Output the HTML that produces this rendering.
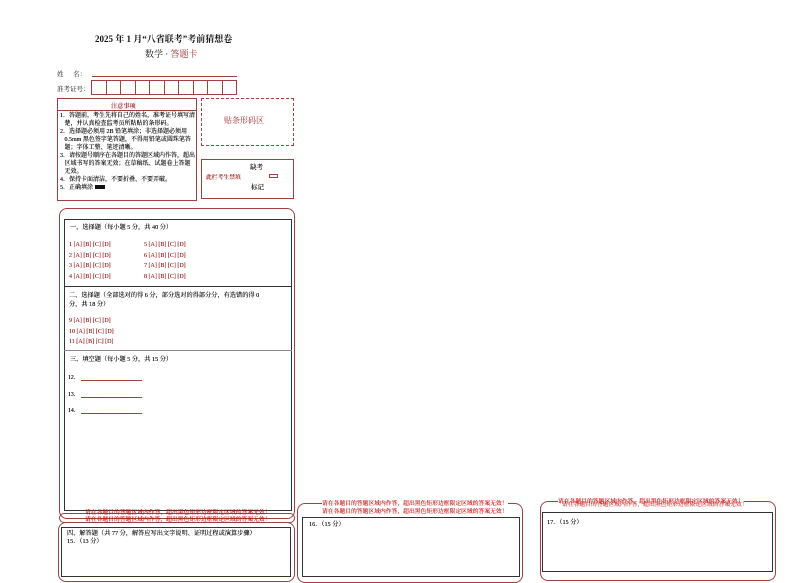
<!DOCTYPE html>
<html><head><meta charset="utf-8"><style>
*{margin:0;padding:0;box-sizing:border-box}
body{width:794px;height:562px;background:#fff;position:relative;overflow:hidden;font-family:"Liberation Serif","Noto Serif CJK SC",serif;color:#111}
.a{position:absolute;white-space:nowrap}
.r{color:#a52a2a}
.s{font-size:5.8px;line-height:8px;text-shadow:0 0 .3px currentColor}
.red{color:#d01010}
.rb{border:1px solid #a0403f}
.kb{border:1px solid #333}
</style></head><body>
<div class="a" style="left:95px;top:32px;font-size:9px;font-weight:bold">2025 年 1 月“八省联考”考前猜想卷</div>
<div class="a" style="left:145px;top:47px;font-size:9px">数学 · <span class="r">答题卡</span></div>
<div class="a" style="left:57px;top:69px;font-size:6.5px">姓&nbsp;&nbsp;&nbsp;&nbsp;&nbsp;&nbsp;名：</div>
<div class="a" style="left:92px;top:76px;width:145px;border-top:1px solid #a0403f"></div>
<div class="a" style="left:57px;top:84px;font-size:6.5px">准考证号：</div>
<div class="a" style="left:91px;top:80px;width:146px;height:15px;display:flex">
<div style="flex:1;border:1px solid #a0403f"></div><div style="flex:1;border:1px solid #a0403f;border-left:0"></div><div style="flex:1;border:1px solid #a0403f;border-left:0"></div><div style="flex:1;border:1px solid #a0403f;border-left:0"></div><div style="flex:1;border:1px solid #a0403f;border-left:0"></div><div style="flex:1;border:1px solid #a0403f;border-left:0"></div><div style="flex:1;border:1px solid #a0403f;border-left:0"></div><div style="flex:1;border:1px solid #a0403f;border-left:0"></div><div style="flex:1;border:1px solid #a0403f;border-left:0"></div><div style="flex:1;border:1px solid #a0403f;border-left:0"></div></div>
<div class="a rb" style="left:57px;top:98px;width:140px;height:103px"></div>
<div class="a" style="left:57px;top:110px;width:140px;border-top:1px solid #a0403f"></div>
<div class="a r" style="left:111px;top:101px;font-size:6.2px;font-weight:bold">注意事项</div>
<div class="a s" style="left:60px;top:112px;font-size:6px">1．答题前，考生先将自己的姓名，准考证号填写清<br>&nbsp;&nbsp;&nbsp;楚，并认真检查监考员所粘贴的条形码。<br>2．选择题必须用 2B 铅笔填涂；非选择题必须用<br>&nbsp;&nbsp;&nbsp;0.5mm 黑色签字笔答题，不得用铅笔或圆珠笔答<br>&nbsp;&nbsp;&nbsp;题；字体工整、笔迹清晰。<br>3．请按题号顺序在各题目的答题区域内作答，超出<br>&nbsp;&nbsp;&nbsp;区域书写的答案无效；在草稿纸、试题卷上答题<br>&nbsp;&nbsp;&nbsp;无效。<br>4．保持卡面清洁，不要折叠、不要弄破。<br>5．正确填涂 <span style="display:inline-block;width:10px;height:4px;background:#111"></span></div>
<div class="a" style="left:201px;top:98px;width:93px;height:48px;border:1px dashed #a0403f"></div>
<div class="a r" style="left:224px;top:115px;font-size:8px">贴条形码区</div>
<div class="a rb" style="left:201px;top:159px;width:93px;height:40px"></div>
<div class="a s" style="left:250px;top:164px;font-size:6.5px">缺考</div>
<div class="a r" style="left:206px;top:172px;font-size:5.8px;font-weight:bold">此栏考生禁填</div>
<div class="a rb" style="left:269px;top:174px;width:9px;height:4px"></div>
<div class="a s" style="left:251px;top:184px;font-size:6.5px">标记</div>

<div class="a rb" style="left:59px;top:208px;width:236px;height:311px;border-radius:8px"></div>
<div class="a kb" style="left:64px;top:219px;width:228px;height:292px;background:#fff"></div>
<div class="a" style="left:64px;top:286px;width:228px;border-top:1px solid #333"></div>
<div class="a" style="left:64px;top:350px;width:228px;border-top:1px solid #888"></div>
<div class="a s" style="left:70px;top:224px;font-size:6.2px">一、选择题（每小题 5 分，共 40 分）</div>
<div class="a s r" style="left:69px;top:240px;line-height:10.5px;font-size:6px">1 [A] [B] [C] [D]<br>2 [A] [B] [C] [D]<br>3 [A] [B] [C] [D]<br>4 [A] [B] [C] [D]</div>
<div class="a s r" style="left:144px;top:240px;line-height:10.5px;font-size:6px">5 [A] [B] [C] [D]<br>6 [A] [B] [C] [D]<br>7 [A] [B] [C] [D]<br>8 [A] [B] [C] [D]</div>
<div class="a s" style="left:69px;top:291px;font-size:6.2px;line-height:9px">二、选择题（全部选对的得 6 分，部分选对的得部分分，有选错的得 0<br>分，共 18 分）</div>
<div class="a s r" style="left:69px;top:316px;line-height:10.5px;font-size:6px">9 [A] [B] [C] [D]<br>10 [A] [B] [C] [D]<br>11 [A] [B] [C] [D]</div>
<div class="a s" style="left:70px;top:356px;font-size:6.2px">三、填空题（每小题 5 分，共 15 分）</div>
<div class="a s" style="left:68px;top:374px">12．</div><div class="a" style="left:81px;top:380px;width:61px;border-top:1px solid #a0403f"></div>
<div class="a s" style="left:68px;top:391px">13．</div><div class="a" style="left:81px;top:397px;width:61px;border-top:1px solid #a0403f"></div>
<div class="a s" style="left:68px;top:407px">14．</div><div class="a" style="left:81px;top:413px;width:61px;border-top:1px solid #a0403f"></div>

<div class="a rb" style="left:59px;top:513px;width:236px;height:10px;border-radius:6px"></div>
<div class="a s red" style="left:85px;top:510px;font-size:5.8px;line-height:7px">请在各题目的答题区域内作答，超出黑色矩形边框限定区域的答案无效！<br>请在各题目的答题区域内作答，超出黑色矩形边框限定区域的答案无效！</div>
<div class="a rb" style="left:58px;top:522px;width:237px;height:60px;border-radius:8px"></div>
<div class="a kb" style="left:61px;top:527px;width:230px;height:50px"></div>
<div class="a s" style="left:67px;top:530px;font-size:6.2px;line-height:8px">四、解答题（共 77 分，解答应写出文字说明、证明过程或演算步骤）<br>15．（13 分）</div>

<div class="a rb" style="left:297px;top:503px;width:226px;height:80px;border-radius:8px"></div>
<div class="a s red" style="left:322px;top:501px;font-size:5.8px;line-height:7.5px;background:#fff">请在各题目的答题区域内作答，超出黑色矩形边框限定区域的答案无效！<br>请在各题目的答题区域内作答，超出黑色矩形边框限定区域的答案无效！</div>
<div class="a kb" style="left:302px;top:517px;width:218px;height:60px"></div>
<div class="a s" style="left:309px;top:521px;font-size:6.2px">16．（15 分）</div>

<div class="a rb" style="left:540px;top:501px;width:236px;height:80px;border-radius:8px"></div>
<div class="a s red" style="left:558px;top:499px;font-size:5.8px;line-height:7px;background:#fff">请在各题目的答题区域内作答，超出黑色矩形边框限定区域的答案无效！</div>
<div class="a s red" style="left:562px;top:502px;font-size:5.8px;line-height:7px;opacity:.8">请在各题目的答题区域内作答，超出黑色矩形边框限定区域的答案无效！</div>
<div class="a kb" style="left:542px;top:512px;width:231px;height:60px"></div>
<div class="a s" style="left:547px;top:519px;font-size:6.2px">17．（15 分）</div>
</body></html>
